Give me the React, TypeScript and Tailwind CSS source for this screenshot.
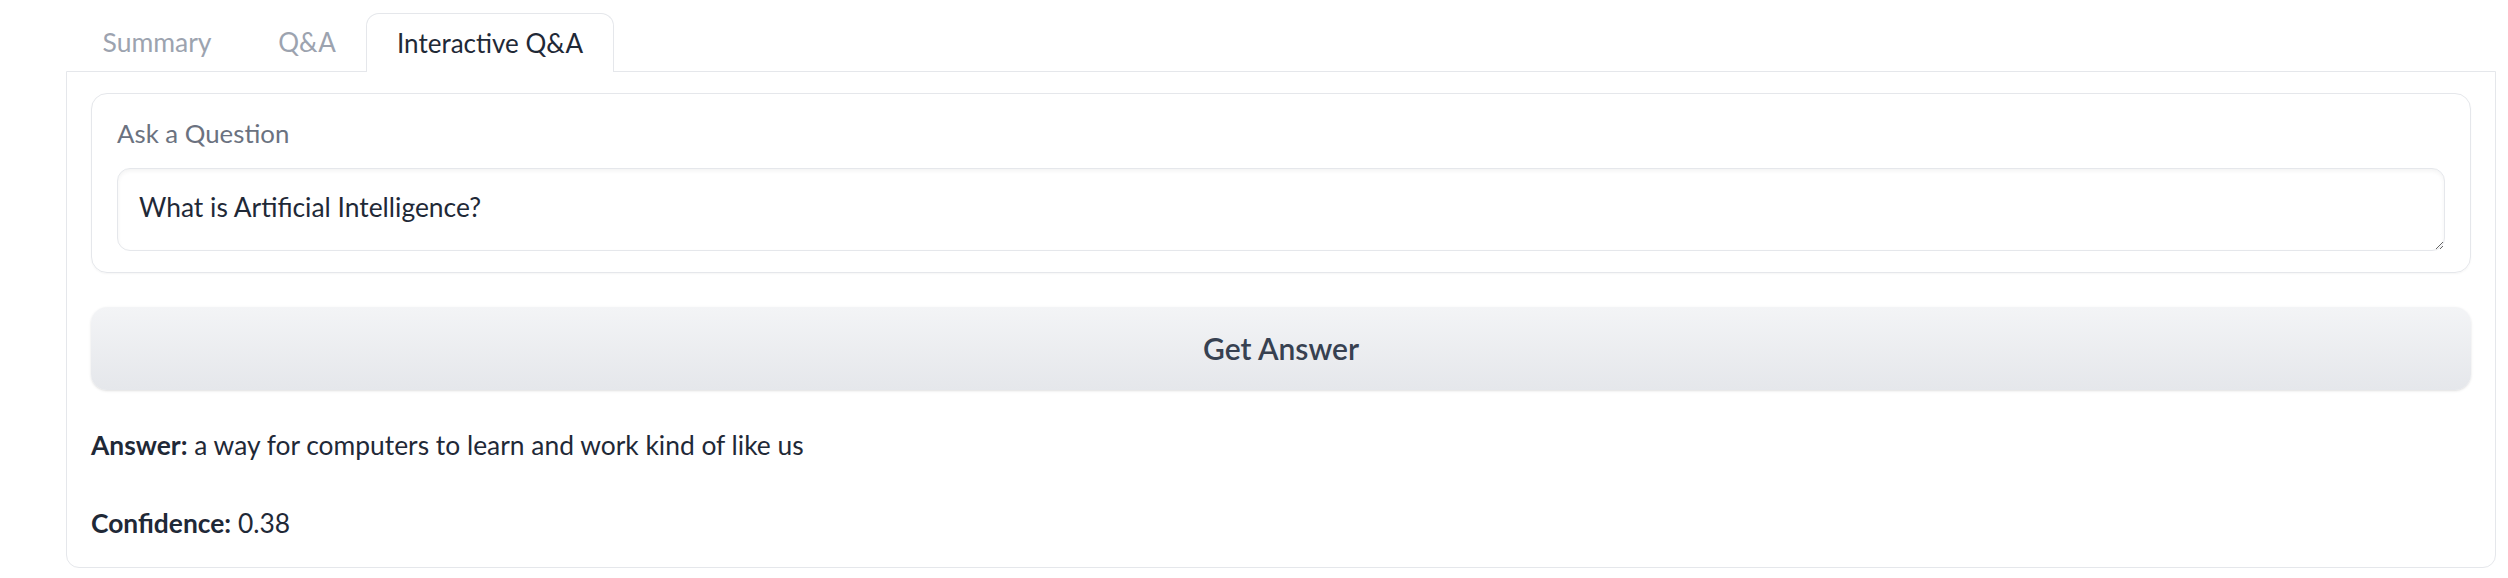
export default function App() {
  return (
    <div className="w-full h-[578px] bg-white overflow-hidden font-['Lato',sans-serif] text-[#1f2937]">
      <div className="pl-[66px] pr-[12px] pt-[13px]">
        <div className="flex items-end h-[58px] relative z-10">
          <button className="w-[182px] h-[58px] text-[26.5px] leading-none text-[#9ca3af] border border-transparent text-center">
            Summary
          </button>
          <button className="w-[118px] h-[58px] text-[26px] leading-none text-[#9ca3af] border border-transparent text-center">
            Q&amp;A
          </button>
          <button className="w-[248px] h-[59px] -mb-px text-[26px] leading-none text-[#1f2937] bg-white border border-b-0 border-[#e5e7eb] rounded-t-[13px] text-center">
            Interactive Q&amp;A
          </button>
        </div>
        <div className="h-[497px] border border-[#e5e7eb] rounded-b-[13px] px-[24px] pt-[21px]">
          <div className="h-[180px] border border-[#e5e7eb] rounded-[16px] shadow-[0_1px_2px_rgba(0,0,0,0.04)] px-[25px] pt-[20px]">
            <div className="text-[25.8px] leading-[38px] text-[#6b7280]">Ask a Question</div>
            <textarea
              defaultValue="What is Artificial Intelligence?"
              className="mt-[16px] block w-full h-[83px] resize-y border border-[#e5e7eb] rounded-[13px] px-[21px] py-[19px] text-[26.4px] leading-[38px] text-[#1f2937] shadow-[inset_0_2px_4px_rgba(0,0,0,0.05)] outline-none"
            />
          </div>
          <button className="mt-[34px] w-full h-[83px] rounded-[16px] bg-gradient-to-b from-[#f3f4f6] to-[#e5e7eb] shadow-[0_1px_3px_rgba(0,0,0,0.1),0_1px_2px_-1px_rgba(0,0,0,0.1)] text-[30px] font-semibold text-[#374151]">
            Get Answer
          </button>
          <p className="mt-[35px] text-[26.4px] leading-[40px]">
            <strong className="font-bold">Answer:</strong> a way for computers to learn and work kind of like us
          </p>
          <p className="mt-[38px] text-[26.4px] leading-[40px]">
            <strong className="font-bold">Confidence:</strong> 0.38
          </p>
        </div>
      </div>
    </div>
  );
}
